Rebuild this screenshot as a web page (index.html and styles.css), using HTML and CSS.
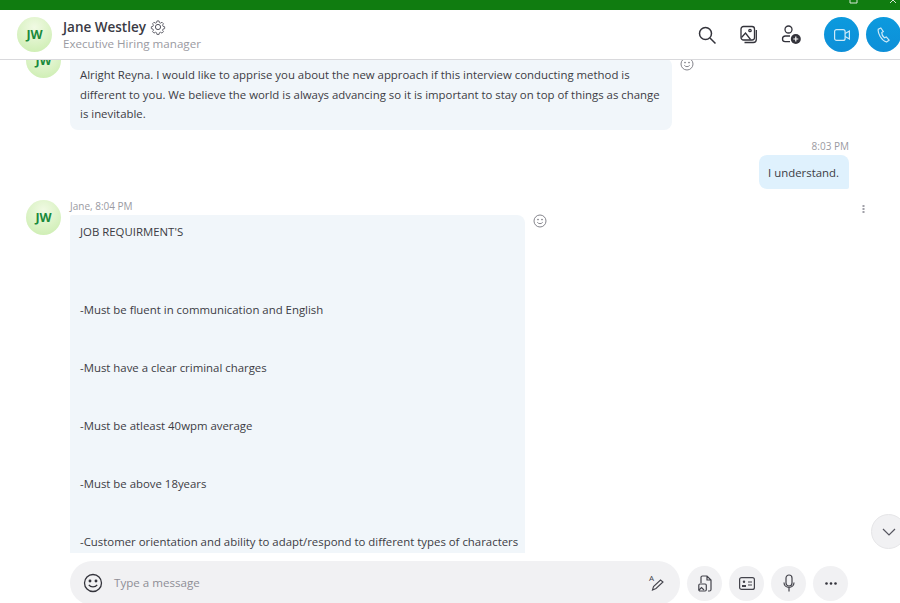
FILE: index.html
```html
<!DOCTYPE html>
<html lang="en">
<head>
<meta charset="utf-8">
<title>Jane Westley</title>
<link rel="stylesheet" href="styles.css">
</head>
<body>
<div class="app">
  <div class="titlebar">
    <svg class="tb-icon" width="10" height="4" viewBox="0 0 10 4"><path d="M1 0v3h7V0" fill="none" stroke="#d6e6d6" stroke-width="1"/></svg>
    <svg class="tb-icon tb-x" width="8" height="4" viewBox="0 0 8 4"><path d="M1 3 4 0M7 3 4 0" fill="none" stroke="#d6e6d6" stroke-width="1"/></svg>
  </div>
  <header class="header">
    <div class="avatar">JW</div>
    <div class="who">
      <div class="name-row">
        <span class="name">Jane Westley</span>
        <svg width="16" height="16" viewBox="0 0 16 16" fill="none" stroke="#55555f" stroke-width="1"><path d="M6.8 1.2h2.4l.4 1.9 1.3.6 1.7-1 1.6 1.7-1 1.6.5 1.3 1.9.5v2.2l-1.9.5-.5 1.3 1 1.6-1.6 1.7-1.7-1-1.3.6-.4 1.9H6.8l-.4-1.9-1.3-.6-1.7 1-1.6-1.7 1-1.6-.5-1.3-1.9-.5V7.8l1.9-.5.5-1.3-1-1.6 1.6-1.7 1.7 1 1.3-.6z" transform="translate(1 .9) scale(.875)"/><circle cx="8" cy="8" r="2.6"/></svg>
      </div>
      <div class="role">Executive Hiring manager</div>
    </div>
    <div class="actions">
      <svg class="act" width="20" height="20" viewBox="0 0 20 20" fill="none" stroke="#33333b" stroke-width="1.5"><circle cx="8.5" cy="8.5" r="6"/><path d="m13 13 5.500 5.500"/></svg>
      <svg class="act" width="18" height="20" viewBox="0 0 18 20" fill="none" stroke="#33333b" stroke-width="1.3"><rect x="1" y="1.5" width="13.5" height="13.5" rx="2.5"/><path d="M16.300 5v9.500a3 3 0 0 1-3 3H4.500"/><circle cx="10" cy="5.500" r="1.200"/><path d="m1.500 12.500 4-4.500 5 6.500"/></svg>
      <svg class="act" width="20" height="20" viewBox="0 0 20 20" fill="none" stroke="#33333b" stroke-width="1.3"><circle cx="7.5" cy="4.5" r="3.5"/><path d="M9 11H4.500A3 3 0 0 0 1.500 14a2.600 2.600 0 0 0 2.600 2.600H9"/><circle cx="14.800" cy="14" r="5" fill="#33333b" stroke="none"/><path d="M14.800 11.500v5M12.300 14h5" stroke="#fff" stroke-width="1.200"/></svg>
      <div class="call-group">
        <div class="call"><svg width="16" height="12" viewBox="0 0 16 12" fill="none" stroke="#cfeaf8" stroke-width="1.200"><rect x=".6" y=".6" width="10.500" height="10.800" rx="2"/><path d="m11.100 4.500 4.300-2.500v8l-4.300-2.500"/></svg></div>
        <div class="call"><svg width="13" height="16" viewBox="0 0 13 16" fill="none" stroke="#cfeaf8" stroke-width="1.200"><path d="M3.800 1 1.300 2.200C.4 6 4.500 13.500 9.500 15l2.600-1.800-2.800-3.300-1.900.9C6 9.700 4.700 7.200 4.800 5.500L6.300 4.500z"/></svg></div>
      </div>
    </div>
  </header>

  <main class="messages">
    <div class="row row-first">
      <div class="avatar avatar-msg">JW</div>
      <div class="body">
        <div class="bubble-line bubble-line-first">
          <div class="bubble bubble-in bubble-first">Alright Reyna. I would like to apprise you about the new approach if this interview conducting method is different to you. We believe the world is always advancing so it is important to stay on top of things as change is inevitable.</div>
          <svg class="smile" width="14" height="14" viewBox="0 0 14 14" fill="none" stroke="#77777f" stroke-width=".9"><circle cx="7" cy="7" r="6"/><circle cx="5" cy="5.600" r=".5"/><circle cx="9" cy="5.600" r=".5"/><path d="M4.300 8.300c1.300 1.800 4.100 1.800 5.400 0"/></svg>
        </div>
      </div>
    </div>

    <div class="row-out">
      <div class="time">8:03 PM</div>
      <div class="bubble bubble-out">I understand.</div>
    </div>

    <div class="row row-second">
      <div class="avatar avatar-msg">JW</div>
      <div class="body">
        <div class="time">Jane, 8:04 PM</div>
        <div class="bubble-line">
          <div class="bubble bubble-in bubble-long">
            <p>JOB REQUIRMENT'S</p>
            <p class="gap-first">-Must be fluent in communication and English</p>
            <p>-Must have a clear criminal charges</p>
            <p>-Must be atleast 40wpm average</p>
            <p>-Must be above 18years</p>
            <p>-Customer orientation and ability to adapt/respond to different types of characters</p>
          </div>
          <svg class="smile" width="14" height="14" viewBox="0 0 14 14" fill="none" stroke="#77777f" stroke-width=".9"><circle cx="7" cy="7" r="6"/><circle cx="5" cy="5.600" r=".5"/><circle cx="9" cy="5.600" r=".5"/><path d="M4.300 8.300c1.300 1.800 4.100 1.800 5.400 0"/></svg>
        </div>
      </div>
      <svg class="kebab" width="3" height="8" viewBox="0 0 3 8" fill="#a0a0a8"><rect x=".5" width="2" height="2"/><rect x=".5" y="3" width="2" height="2"/><rect x=".5" y="6" width="2" height="2"/></svg>
    </div>
    <button class="scroll-down" type="button" aria-label="Scroll down"><svg width="14" height="8" viewBox="0 0 14 8" fill="none" stroke="#55555f" stroke-width="1.200"><path d="m1 1 6 6 6-6"/></svg></button>
  </main>

  <footer class="composer">
    <div class="input">
      <svg width="20" height="20" viewBox="0 0 20 20" fill="none" stroke="#33333b" stroke-width="1.300"><circle cx="10" cy="10" r="8.500"/><circle cx="7" cy="8" r=".8" fill="#33333b"/><circle cx="13" cy="8" r=".8" fill="#33333b"/><path d="M5.800 11.800c1.900 2.800 6.500 2.800 8.400 0"/></svg>
      <span class="placeholder">Type a message</span>
      <span class="format">
        <span class="format-a">A</span>
        <svg width="14" height="12" viewBox="0 0 14 12" fill="none" stroke="#44444c" stroke-width="1.100"><path d="m1.500 11 1-3.500L9.500 1 12 3 5 9.500z"/></svg>
      </span>
    </div>
    <div class="tool"><svg width="14" height="17" viewBox="0 0 14 17" fill="none" stroke="#44444c" stroke-width="1.200"><path d="M3 8V2.500A1.500 1.500 0 0 1 4.500 1H9l4 4v9.500a1.500 1.500 0 0 1-1.500 1.500H10M9 1v4h4"/><rect x=".8" y="9" width="7.500" height="7" rx="1.200"/><path d="m1 15 2.500-2.500 2.500 2.500"/></svg></div>
    <div class="tool"><svg width="16" height="13" viewBox="0 0 16 13" fill="none" stroke="#44444c" stroke-width="1.200"><rect x=".6" y=".6" width="14.800" height="11.800" rx="2"/><path d="M9 5h4M9 8h4"/><circle cx="5" cy="4.700" r="1.200" fill="#44444c" stroke="none"/><path d="M3 9h4" stroke-width="2"/></svg></div>
    <div class="tool"><svg width="12" height="18" viewBox="0 0 12 18" fill="none" stroke="#44444c" stroke-width="1.200"><rect x="3" y="1" width="6" height="11" rx="3"/><path d="M1 8.500c0 6.500 10 6.500 10 0M6 14v3.500"/></svg></div>
    <div class="tool"><svg width="12" height="3" viewBox="0 0 12 3" fill="#33333b"><circle cx="1.500" cy="1.500" r="1.300"/><circle cx="6" cy="1.500" r="1.300"/><circle cx="10.500" cy="1.500" r="1.300"/></svg></div>
  </footer>
</div>
</body>
</html>
```
FILE: styles.css
```css
* { box-sizing: border-box; }
html, body { margin: 0; padding: 0; height: 100%; }
body { background: #fff; font-family: "Open Sans", "Noto Sans", "Liberation Sans", sans-serif; color: #3c3c44; overflow: hidden; }
.app { width: 900px; height: 603px; display: flex; flex-direction: column; overflow: hidden; }

.titlebar { height: 10px; background: #107c10; display: flex; justify-content: flex-end; gap: 30px; align-items: flex-start; padding-right: 3px; flex: none; }
.header { height: 50px; flex: none; display: flex; align-items: center; padding: 0 0 0 17px; border-bottom: 1px solid #d9d9dc; background: #fff; position: relative; z-index: 1; }
.avatar { width: 35px; height: 35px; border-radius: 50%; background: radial-gradient(circle at 50% 30%, #f1fae4, #c8ecab); color: #1a8a3c; font-weight: 700; font-size: 12.500px; display: flex; align-items: center; justify-content: center; flex: none; }
.who { margin-left: 11px; padding-top: 1px; }
.name-row { display: flex; align-items: center; gap: 4px; height: 18px; }
.name { font-size: 13.500px; font-weight: 600; color: #3a3a44; line-height: 18px; }
.role { font-size: 11.600px; color: #9a9aa2; line-height: 16px; }
.actions { margin-left: auto; display: flex; align-items: center; }
.act { margin-right: 23px; }
.call-group { display: flex; gap: 7px; margin-right: -1px; }
.call { width: 35px; height: 35px; border-radius: 50%; background: linear-gradient(180deg, #0c9ade, #0d8fd8); display: flex; align-items: center; justify-content: center; flex: none; }

.messages { flex: 1; min-height: 0; overflow: hidden; position: relative; font-size: 11.400px; }
.row { display: flex; padding-left: 26px; position: relative; }
.row-first { margin-top: -17px; }
.avatar-msg { margin-right: 9px; }
.body { min-width: 0; }
.time { font-size: 10px; color: #9a9aa2; line-height: 12px; margin-bottom: 3px; }
.bubble-line { display: flex; align-items: flex-start; }
.bubble-line-first { margin-top: 15px; }
.bubble { color: #3c3c44; line-height: 19.500px; }
.bubble-in { background: #f1f6fa; padding: 7px 10px; border-radius: 2px 8px 8px 8px; }
.bubble-first { width: 602px; height: 72px; }
.smile { margin-left: 8px; margin-top: -1px; flex: none; }

.row-out { display: flex; flex-direction: column; align-items: flex-end; padding-right: 51px; margin-top: 10px; }
.bubble-out { background: #dff1fd; padding: 7.500px 10px 7.500px 9px; height: 34px; border-radius: 8px 8px 2px 8px; }

.row-second { margin-top: 11px; }
.bubble-long { width: 455px; padding-bottom: 40px; }
.bubble-long p { margin: 0 0 38.500px; white-space: nowrap; }
.bubble-long .gap-first { margin-top: 58px; }
.kebab { position: absolute; left: 862px; top: 5px; }

.scroll-down { position: absolute; right: -6px; top: 454px; width: 35px; height: 35px; border-radius: 50%; background: #f1f1f3; border: 1px solid #e6e6e8; padding: 0; display: flex; align-items: center; justify-content: center; }

.composer { height: 50px; flex: none; display: flex; align-items: center; padding-left: 70px; background: #fff; }
.input { width: 610px; height: 44px; margin-top: 10px; border-radius: 22px; background: #f1f1f3; display: flex; align-items: center; padding: 0 14px 0 13px; }
.placeholder { margin-left: 11px; margin-bottom: 2px; font-size: 11.600px; color: #8e8e96; }
.format { margin-left: auto; position: relative; width: 16px; height: 16px; }
.format svg { position: absolute; left: 1px; bottom: 0; }
.format-a { position: absolute; left: -1px; top: -3px; font-size: 8px; color: #44444c; }
.tool { width: 35px; height: 35px; border-radius: 50%; background: #f1f1f3; display: flex; align-items: center; justify-content: center; margin-left: 7px; margin-top: 10px; flex: none; }
```
